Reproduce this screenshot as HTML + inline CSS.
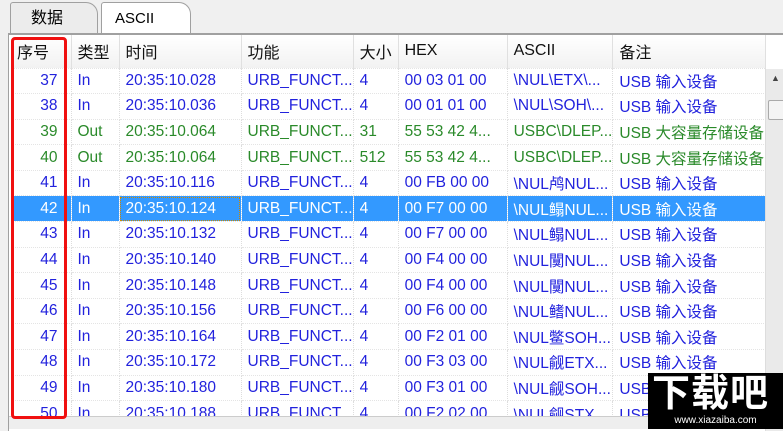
<!DOCTYPE html><html><head><meta charset="utf-8"><style>
body{margin:0;width:783px;height:429px;overflow:hidden;background:#f0f0f0;font-family:"Liberation Sans","Noto Sans CJK SC",sans-serif;position:relative}
.tab{position:absolute;top:2px;height:32px;border:1px solid #a0a0a0;border-bottom:none;font-size:16px;line-height:32px;border-radius:3px 12px 0 0}
.panel{position:absolute;left:8px;top:33px;width:775px;height:396px;background:#fff;border-top:2px solid #a0a0a0;border-left:1px solid #a0a0a0}
table{position:absolute;left:2px;top:0;border-collapse:collapse;font-size:15.5px;table-layout:fixed}
td{height:25.6px;padding:0 0 0 6px;white-space:nowrap;overflow:hidden;border-right:1px dotted #ddd;border-bottom:1px dotted #e4e4e4;color:#2222dd;box-sizing:border-box}
tr.h td{height:33px;color:#111;background:linear-gradient(#fff,#f2f2f2);border-right:1px solid #e0e0e0;font-size:16px}
td.n{text-align:right;padding-right:13px}
tr.g td{color:#2a8a2a}
tr.s td{background:#3399ff;color:#fff}
</style></head><body>
<div class="tab" style="left:10px;width:88px;background:#ececec;padding-left:20px;box-sizing:border-box">数据</div>
<div class="tab" style="left:101px;width:90px;background:#fff;padding-left:13px;box-sizing:border-box;font-size:15px">ASCII</div>
<div class="panel">
<table>
<colgroup><col style="width:60px"><col style="width:48px"><col style="width:122px"><col style="width:112px"><col style="width:45px"><col style="width:109px"><col style="width:105px"><col style="width:153px"></colgroup>
<tr class="h"><td>序号</td><td>类型</td><td>时间</td><td>功能</td><td>大小</td><td>HEX</td><td>ASCII</td><td>备注</td></tr>
<tr><td class="n">37</td><td>In</td><td>20:35:10.028</td><td>URB_FUNCT...</td><td>4</td><td>00 03 01 00</td><td>\NUL\ETX\...</td><td>USB 输入设备</td></tr>
<tr><td class="n">38</td><td>In</td><td>20:35:10.036</td><td>URB_FUNCT...</td><td>4</td><td>00 01 01 00</td><td>\NUL\SOH\...</td><td>USB 输入设备</td></tr>
<tr class="g"><td class="n">39</td><td>Out</td><td>20:35:10.064</td><td>URB_FUNCT...</td><td>31</td><td>55 53 42 4...</td><td>USBC\DLEP...</td><td>USB 大容量存储设备</td></tr>
<tr class="g"><td class="n">40</td><td>Out</td><td>20:35:10.064</td><td>URB_FUNCT...</td><td>512</td><td>55 53 42 4...</td><td>USBC\DLEP...</td><td>USB 大容量存储设备</td></tr>
<tr><td class="n">41</td><td>In</td><td>20:35:10.116</td><td>URB_FUNCT...</td><td>4</td><td>00 FB 00 00</td><td>\NUL鸬NUL...</td><td>USB 输入设备</td></tr>
<tr class="s"><td class="n">42</td><td>In</td><td style="outline:1px dotted #c80;outline-offset:-2px">20:35:10.124</td><td>URB_FUNCT...</td><td>4</td><td>00 F7 00 00</td><td>\NUL鳎NUL...</td><td>USB 输入设备</td></tr>
<tr><td class="n">43</td><td>In</td><td>20:35:10.132</td><td>URB_FUNCT...</td><td>4</td><td>00 F7 00 00</td><td>\NUL鳎NUL...</td><td>USB 输入设备</td></tr>
<tr><td class="n">44</td><td>In</td><td>20:35:10.140</td><td>URB_FUNCT...</td><td>4</td><td>00 F4 00 00</td><td>\NUL闃NUL...</td><td>USB 输入设备</td></tr>
<tr><td class="n">45</td><td>In</td><td>20:35:10.148</td><td>URB_FUNCT...</td><td>4</td><td>00 F4 00 00</td><td>\NUL闃NUL...</td><td>USB 输入设备</td></tr>
<tr><td class="n">46</td><td>In</td><td>20:35:10.156</td><td>URB_FUNCT...</td><td>4</td><td>00 F6 00 00</td><td>\NUL鳍NUL...</td><td>USB 输入设备</td></tr>
<tr><td class="n">47</td><td>In</td><td>20:35:10.164</td><td>URB_FUNCT...</td><td>4</td><td>00 F2 01 00</td><td>\NUL鳖SOH...</td><td>USB 输入设备</td></tr>
<tr><td class="n">48</td><td>In</td><td>20:35:10.172</td><td>URB_FUNCT...</td><td>4</td><td>00 F3 03 00</td><td>\NUL觎ETX...</td><td>USB 输入设备</td></tr>
<tr><td class="n">49</td><td>In</td><td>20:35:10.180</td><td>URB_FUNCT...</td><td>4</td><td>00 F3 01 00</td><td>\NUL觎SOH...</td><td>USB 输入设备</td></tr>
<tr><td class="n">50</td><td>In</td><td>20:35:10.188</td><td>URB_FUNCT...</td><td>4</td><td>00 F2 02 00</td><td>\NUL觎STX...</td><td>USB 输入设备</td></tr>
</table>
<div style="position:absolute;left:756px;top:34px;width:19px;height:362px;background:#eaeaea;border-left:1px solid #ddd"></div>
<div style="position:absolute;left:759px;top:65px;width:15px;height:18px;background:#f4f4f4;border:1px solid #aaa;border-radius:2px"></div>
<div style="position:absolute;left:762px;top:38px;font-size:9px;color:#444">▲</div>
<div style="position:absolute;left:0;top:381px;width:756px;height:12px;background:#eee;border-top:1px solid #ccc"></div>
</div>
<div style="position:absolute;left:11px;top:37px;width:56px;height:382px;border:3px solid #f01010;border-radius:4px;box-sizing:border-box"></div>
<div style="position:absolute;left:648px;top:373px;width:135px;height:56px;background:#000;color:#fff">
<div style="font-size:38px;font-weight:bold;line-height:42px;padding-left:4px;letter-spacing:1px">下载吧</div>
<div style="font-size:10px;text-align:center;line-height:12px">www.xiazaiba.com</div></div>
</body></html>
